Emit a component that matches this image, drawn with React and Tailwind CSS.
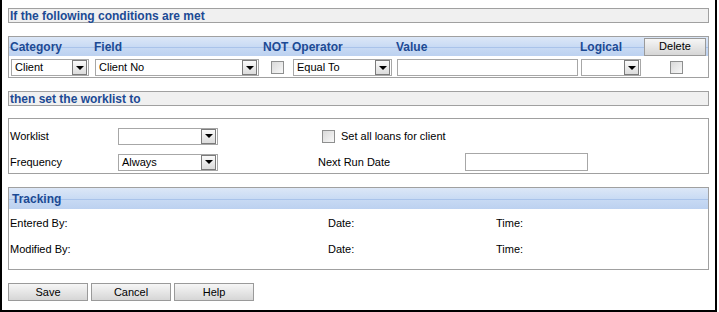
import React from 'react';

const font = { fontFamily: '"Liberation Sans", Arial, sans-serif' };

function Select({ value = '', width }) {
  return (
    <div className={`flex h-[17px] items-center border border-[#a7a7a7] bg-white ${width}`}>
      <span className="flex-1 truncate pl-[3px] text-[11px] leading-none text-black">{value}</span>
      <span className="mr-[1px] flex h-[15px] w-[15px] items-center justify-center border border-[#7b7b7b] bg-gradient-to-b from-[#fafafa] to-[#dcdcdc]">
        <span className="h-0 w-0 border-x-[4px] border-t-[4px] border-x-transparent border-t-black" />
      </span>
    </div>
  );
}

function Checkbox() {
  return <span className="block h-[13px] w-[13px] border border-[#8e8f8f] bg-gradient-to-br from-[#d9d9d9] to-[#f8f8f8]" />;
}

function SectionBar({ children }) {
  return (
    <div className="flex h-[15px] items-center border border-[#a0a0a0] bg-[#f0f0f0] pl-[1px] text-[12px] font-bold text-[#1c4a94]">
      {children}
    </div>
  );
}

function GradientBar({ className = '', children }) {
  return (
    <div className={`relative bg-gradient-to-b from-[#dce7f7] via-[#c9dbf4] to-[#bcd1f0] ${className}`}>
      <div className="absolute inset-x-0 top-1/2 h-px bg-[#a9c3ea]" />
      <div className="relative flex h-full items-center">{children}</div>
    </div>
  );
}

function Button({ children, className = '' }) {
  return (
    <button className={`flex h-[18px] items-center justify-center border border-[#9a9a9a] bg-gradient-to-b from-[#f6f6f6] to-[#d6d6d6] text-[11px] text-black ${className}`}>
      {children}
    </button>
  );
}

export default function App() {
  return (
    <div className="h-[312px] w-[717px] border-x-2 border-b-2 border-black bg-white px-[6px] pt-[8px]" style={font}>
      <SectionBar>If the following conditions are met</SectionBar>

      <div className="mt-[13px] h-[42px] border border-[#a0a0a0]">
        <GradientBar className="h-[19px]">
          <div className="grid grid-cols-[84px_169px_29px_104px_184px_64px_63px] pl-[1px] text-[12px] font-bold text-[#1c4a94]">
            <span>Category</span>
            <span>Field</span>
            <span>NOT</span>
            <span>Operator</span>
            <span>Value</span>
            <span>Logical</span>
            <Button className="h-[18px] w-[62px] font-normal">Delete</Button>
          </div>
        </GradientBar>
        <div className="mt-[3px] grid grid-cols-[84px_169px_29px_104px_184px_64px_63px] items-center pl-[2px]">
          <Select value="Client" width="w-[78px]" />
          <Select value="Client No" width="w-[164px]" />
          <div className="pl-[7px]"><Checkbox /></div>
          <Select value="Equal To" width="w-[99px]" />
          <div className="h-[17px] w-[181px] border border-[#a7a7a7] bg-white" />
          <Select width="w-[60px]" />
          <div className="pl-[25px]"><Checkbox /></div>
        </div>
      </div>

      <div className="mt-[13px]">
        <SectionBar>then set the worklist to</SectionBar>
      </div>

      <div className="mt-[12px] h-[56px] border border-[#a0a0a0] px-[1px] pt-[8px] text-[11px] text-black">
        <div className="flex h-[18px] items-center">
          <span className="w-[108px]">Worklist</span>
          <Select width="w-[100px]" />
          <div className="ml-[104px] flex items-center gap-[6px]">
            <Checkbox />
            <span>Set all loans for client</span>
          </div>
        </div>
        <div className="mt-[8px] flex h-[18px] items-center">
          <span className="w-[108px]">Frequency</span>
          <Select value="Always" width="w-[100px]" />
          <span className="ml-[100px] w-[147px]">Next Run Date</span>
          <div className="h-[18px] w-[123px] border border-[#a7a7a7] bg-white" />
        </div>
      </div>

      <div className="mt-[13px] h-[83px] border border-[#a0a0a0] text-[11px] text-black">
        <GradientBar className="h-[21px]">
          <span className="pl-[3px] text-[12px] font-bold text-[#1c4a94]">Tracking</span>
        </GradientBar>
        <div className="mt-[6px] grid grid-cols-[318px_168px_1fr] pl-[1px]">
          <span>Entered By:</span>
          <span>Date:</span>
          <span>Time:</span>
        </div>
        <div className="mt-[9px] grid grid-cols-[318px_168px_1fr] pl-[1px]">
          <span>Modified By:</span>
          <span>Date:</span>
          <span>Time:</span>
        </div>
      </div>

      <div className="mt-[13px] flex gap-[3px]">
        <Button className="w-[80px]">Save</Button>
        <Button className="w-[80px]">Cancel</Button>
        <Button className="w-[80px]">Help</Button>
      </div>
    </div>
  );
}
